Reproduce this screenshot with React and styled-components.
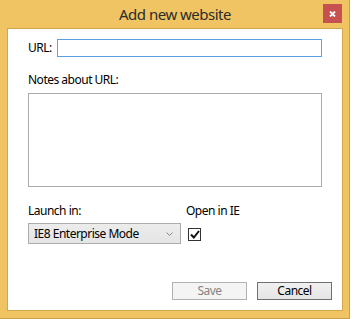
import React from 'react';
import styled, { createGlobalStyle } from 'styled-components';

const Global = createGlobalStyle`
  html, body { margin: 0; padding: 0; background: #ffffff; }
  body { font-family: "Noto Sans", "Open Sans", sans-serif; font-size: 12px; letter-spacing: -0.5px; color: #000; }
  * { box-sizing: border-box; }
`;

const Frame = styled.div`
  width: 350px;
  height: 319px;
  background: #f0c462;
  border-right: 1px solid #c9a04a;
  border-bottom: 1px solid #c9a04a;
  padding: 0 6px 7px 7px;
  display: flex;
  flex-direction: column;
`;

const TitleBar = styled.div`
  height: 28px;
  display: grid;
  grid-template-columns: 1fr auto 1fr;
  align-items: start;
`;

const Title = styled.div`
  grid-column: 2;
  font-size: 15px;
  line-height: 20px;
  padding-top: 4px;
  color: #2b2b2b;
`;

const CloseButton = styled.div`
  grid-column: 3;
  justify-self: end;
  margin-top: 4px;
  margin-right: 1px;
  width: 19px;
  height: 19px;
  background: #c75050;
  display: flex;
  align-items: center;
  justify-content: center;
`;

const Panel = styled.div`
  flex: 1;
  background: #ffffff;
  border: 1px solid #d3a74b;
  padding: 10px 10px 10px 20px;
  display: flex;
  flex-direction: column;
`;

const UrlRow = styled.div`
  display: flex;
  align-items: center;
`;

const Label = styled.div`
  line-height: 16px;
  margin-top: ${p => p.$mt || 0}px;
  white-space: nowrap;
`;

const UrlLabel = styled(Label)`
  width: 29px;
`;

const TextInput = styled.div`
  width: 265px;
  height: 18px;
  border: 1px solid #5d9fe2;
  background: #fff;
`;

const TextArea = styled.div`
  width: 294px;
  height: 94px;
  margin-top: 5px;
  border: 1px solid #ababab;
  background: #fff;
`;

const OptionsRow = styled.div`
  display: flex;
  gap: 5px;
  margin-top: 16px;
`;

const Column = styled.div`
  display: flex;
  flex-direction: column;
`;

const Select = styled.div`
  width: 153px;
  height: 21px;
  margin-top: 4px;
  border: 1px solid #acacac;
  background: linear-gradient(#ececec, #e5e5e5);
  display: flex;
  align-items: center;
  justify-content: space-between;
  padding: 0 7px 0 5px;
  line-height: 16px;
  color: #000;
`;

const CheckBox = styled.div`
  width: 13px;
  height: 13px;
  margin: 9px 0 0 2px;
  border: 1px solid #333333;
  background: #fff;
  display: flex;
  align-items: center;
  justify-content: center;
`;

const ButtonRow = styled.div`
  margin-top: auto;
  display: flex;
  justify-content: flex-end;
  gap: 10px;
`;

const Button = styled.div`
  width: 75px;
  height: 18px;
  display: flex;
  align-items: center;
  justify-content: center;
  line-height: 16px;
  border: 1px solid ${p => (p.$disabled ? '#adb2b5' : '#707070')};
  background: ${p => (p.$disabled ? '#f4f4f4' : 'linear-gradient(#f0f0f0, #e5e5e5)')};
  color: ${p => (p.$disabled ? '#838383' : '#000')};
`;

export default function App() {
  return (
    <>
      <Global />
      <Frame>
        <TitleBar>
          <Title>Add new website</Title>
          <CloseButton>
            <svg width="7" height="6" viewBox="0 0 7 6">
              <path d="M1 0.5 L6 5.5 M6 0.5 L1 5.5" stroke="#fff" strokeWidth="1.8" />
            </svg>
          </CloseButton>
        </TitleBar>
        <Panel>
          <UrlRow>
            <UrlLabel>URL:</UrlLabel>
            <TextInput />
          </UrlRow>
          <Label $mt={15}>Notes about URL:</Label>
          <TextArea />
          <OptionsRow>
            <Column>
              <Label>Launch in:</Label>
              <Select>
                <span>IE8 Enterprise Mode</span>
                <svg width="7" height="4" viewBox="0 0 7 4">
                  <path d="M0.5 0.5 L3.5 3.5 L6.5 0.5" stroke="#8a8a8a" strokeWidth="1" fill="none" />
                </svg>
              </Select>
            </Column>
            <Column>
              <Label>Open in IE</Label>
              <CheckBox>
                <svg width="10" height="9" viewBox="0 0 10 9">
                  <path d="M1 4.5 L3.8 7.5 L9 1" stroke="#111" strokeWidth="2" fill="none" />
                </svg>
              </CheckBox>
            </Column>
          </OptionsRow>
          <ButtonRow>
            <Button $disabled>Save</Button>
            <Button>Cancel</Button>
          </ButtonRow>
        </Panel>
      </Frame>
    </>
  );
}
